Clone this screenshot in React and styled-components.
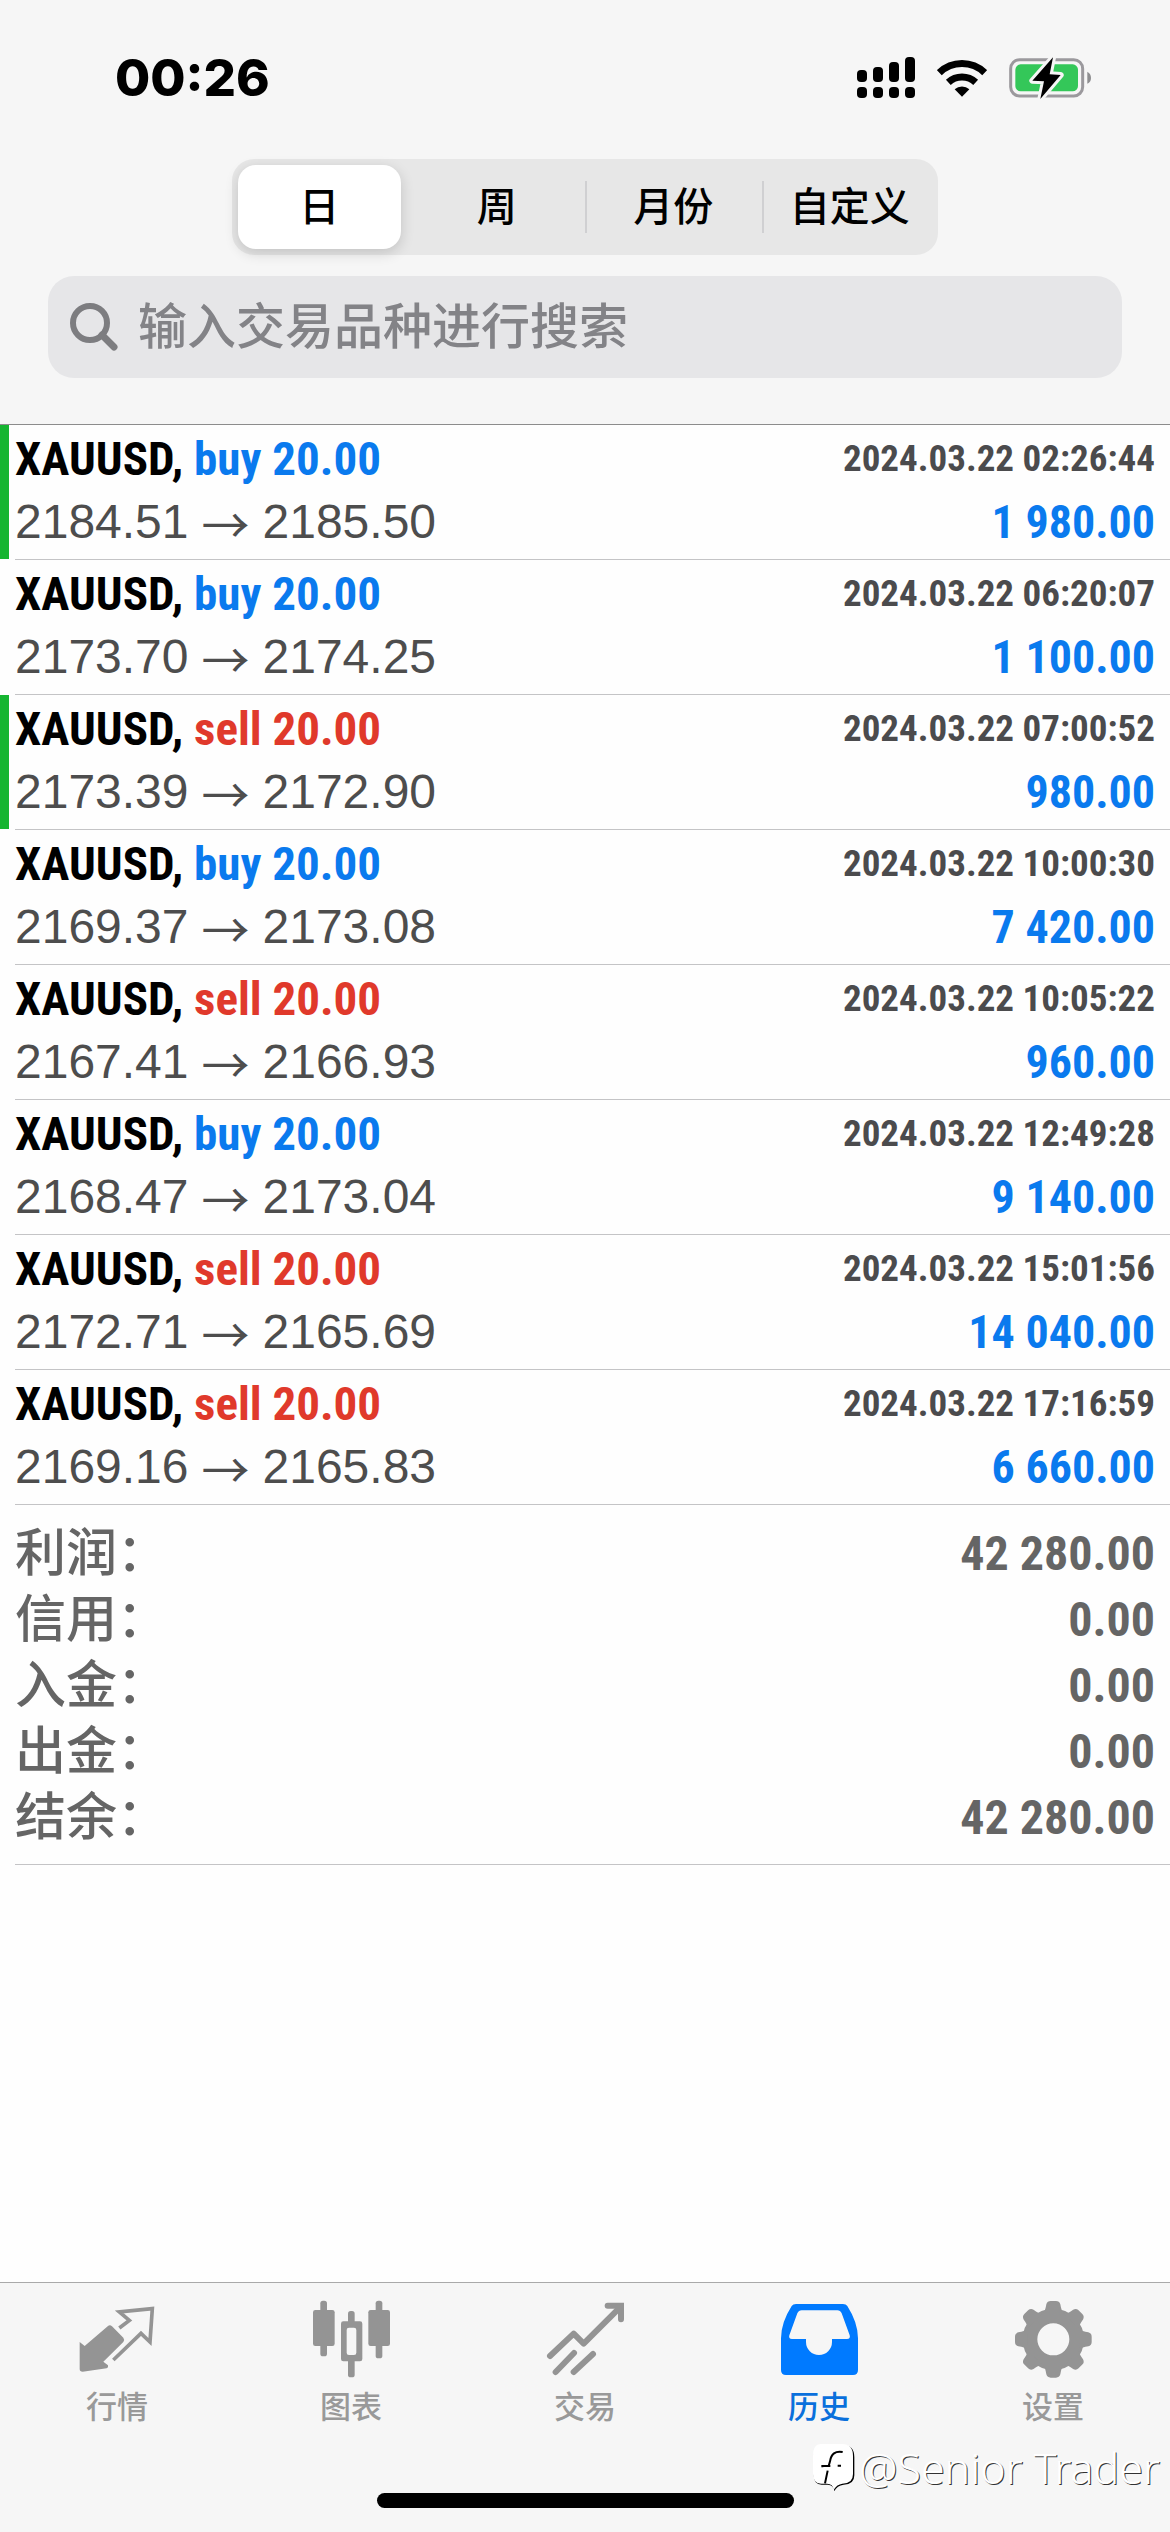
import React, { useState } from "react";
import styled, { createGlobalStyle } from "styled-components";

const sans = `"Liberation Sans", "Noto Sans CJK SC", sans-serif`;
const narrow = `"Roboto Condensed", Roboto, "Noto Sans CJK SC", sans-serif`;
const cjk = `"Noto Sans CJK SC", sans-serif`;

const GlobalStyle = createGlobalStyle`
  * { box-sizing: border-box; }
  body { margin: 0; background: #fff; font-family: ${sans}; }
  button, input { font: inherit; border: 0; margin: 0; padding: 0; background: none; }
`;

const Screen = styled.div`
  min-height: 100vh;
  display: flex;
  flex-direction: column;
  background: #fefefe;
`;

const Header = styled.header`
  background: #f6f6f6;
  border-bottom: 1px solid #8c8c8c;
  padding-bottom: 46px;
`;

const StatusBar = styled.div`
  display: flex;
  align-items: center;
  justify-content: space-between;
  height: 159px;
  padding: 0 78px 3px 115px;
`;

const Clock = styled.time`
  font-family: Inter, sans-serif;
  font-weight: 800;
  font-size: 51px;
  line-height: 60px;
`;

const StatusIcons = styled.div`
  display: flex;
  align-items: center;
  gap: 22px;
`;

const Segments = styled.div`
  display: grid;
  grid-template-columns: repeat(4, 1fr);
  height: 96px;
  margin: 0 232px;
  padding: 6px 0;
  border-radius: 22px;
  background: #e7e7e7;
`;

const Segment = styled.button`
  position: relative;
  display: flex;
  align-items: center;
  justify-content: center;
  border-radius: 18px;
  font-family: ${sans};
  font-weight: 500;
  font-size: 40px;
  line-height: 48px;
  color: #000;
  margin: ${(p) => (p.$active ? "0 8px 0 6px" : "0")};
  background: ${(p) => (p.$active ? "#fff" : "transparent")};
  box-shadow: ${(p) => (p.$active ? "0 4px 14px rgba(0,0,0,.16)" : "none")};

  &::before {
    content: "";
    display: ${(p) => (p.$divided ? "block" : "none")};
    position: absolute;
    left: 0;
    top: 16px;
    bottom: 16px;
    width: 2px;
    background: #d0d0d2;
  }
`;

const Search = styled.label`
  display: flex;
  align-items: center;
  gap: 20px;
  height: 102px;
  margin: 21px 48px 0;
  padding: 0 22px;
  border-radius: 26px;
  background: #e6e6e8;
`;

const SearchInput = styled.input`
  flex: 1;
  min-width: 0;
  font-family: ${sans};
  font-weight: 500;
  font-size: 49px;
  line-height: 72px;
  color: #222;
  outline: none;
  &::placeholder { color: #838387; opacity: 1; }
`;

const Main = styled.main`
  flex: 1;
`;

const Deals = styled.ul`
  list-style: none;
  margin: 0;
  padding: 0;
`;

const Deal = styled.li`
  display: flex;
  height: 135px;
`;

const Marker = styled.span`
  flex: none;
  width: 9px;
  margin-right: 6px;
  margin-bottom: 1px;
  background: ${(p) => (p.$on ? "#16b531" : "transparent")};
`;

const DealBody = styled.div`
  flex: 1;
  display: grid;
  grid-template-columns: 1fr auto;
  grid-template-rows: 63px 63px;
  align-items: center;
  align-content: start;
  padding: 2px 15px 0 0;
  border-bottom: 1px solid #c4c4c6;
`;

const Symbol = styled.span`
  font-family: ${narrow};
  font-weight: 700;
  font-size: 47px;
  line-height: 56px;
  color: #000;
`;

const Side = styled.span`
  color: ${(p) => (p.$side === "buy" ? "#0a7aee" : "#e0392b")};
`;

const Stamp = styled.time`
  font-family: ${narrow};
  font-weight: 700;
  font-size: 37px;
  line-height: 56px;
  color: #4b4b4d;
  text-align: right;
`;

const Prices = styled.span`
  display: flex;
  align-items: center;
  gap: 13px;
  font-size: 48px;
  line-height: 56px;
  color: #4d4d4d;
`;

const Arrow = styled.span`
  font-family: ${cjk};
  font-weight: 400;
`;

const Profit = styled.span`
  font-family: ${narrow};
  font-weight: 700;
  font-size: 46px;
  line-height: 56px;
  color: #0a7aee;
  text-align: right;
`;

const Summary = styled.dl`
  margin: 0 0 0 15px;
  padding: 16px 15px 13px 0;
  border-bottom: 1px solid #c4c4c6;
`;

const SummaryRow = styled.div`
  display: flex;
  align-items: center;
  justify-content: space-between;
  height: 66px;
  color: #656565;
`;

const SummaryLabel = styled.dt`
  font-family: ${sans};
  font-weight: 500;
  font-size: 51px;
  line-height: 66px;
`;

const SummaryValue = styled.dd`
  margin: 0;
  font-family: ${narrow};
  font-weight: 700;
  font-size: 48px;
  line-height: 66px;
`;

const Footer = styled.footer`
  position: relative;
  background: #f6f6f6;
  border-top: 1px solid #a9a9a9;
  padding: 17px 0 24px;
`;

const TabBar = styled.nav`
  display: grid;
  grid-template-columns: repeat(5, 1fr);
`;

const Tab = styled.a`
  display: flex;
  flex-direction: column;
  align-items: center;
  gap: 8px;
  text-decoration: none;
  font-family: ${sans};
  font-weight: 500;
  font-size: 31px;
  line-height: 44px;
  color: ${(p) => (p.$active ? "#0a70dc" : "#999")};
`;

const TabIcon = styled.svg`
  width: 78px;
  height: 78px;
  color: ${(p) => (p.$active ? "#007aff" : "#949494")};
`;

const HomeIndicator = styled.div`
  width: 417px;
  height: 15px;
  margin: 63px auto 0;
  border-radius: 8px;
  background: #000;
`;

const Watermark = styled.div`
  position: absolute;
  right: 10px;
  bottom: 36px;
  display: flex;
  align-items: center;
  gap: 4px;
  font-family: "Noto Sans", sans-serif;
  font-weight: 300;
  font-size: 43px;
  line-height: 56px;
  color: #fff;
  text-shadow: 1px 1px 0 #333;
`;

function Signal() {
  return (
    <svg width="58" height="42" viewBox="0 0 58 42" aria-hidden="true">
      {[13, 10, 5, 0].map((top, i) => (
        <g key={top}>
          <rect x={i * 16} y={top} width="10" height={25 - top} rx="4" />
          <rect x={i * 16} y="30" width="10" height="11" rx="4" />
        </g>
      ))}
    </svg>
  );
}

function Wifi() {
  return (
    <svg width="50" height="38" viewBox="0 0 150 114" aria-hidden="true">
      <g fill="none" stroke="#000" strokeWidth="21">
        <path d="M7 41 A98 98 0 0 1 143 41" />
        <path d="M34 70 A60 60 0 0 1 116 70" />
      </g>
      <path d="M75 113 L53 91 A32 32 0 0 1 97 91 Z" />
    </svg>
  );
}

function Battery() {
  return (
    <svg width="83" height="42" viewBox="567 80 249 126" aria-hidden="true">
      <rect x="572" y="88" width="216" height="109" rx="27" fill="none" stroke="#9b999d" strokeWidth="9" />
      <rect x="586" y="102" width="188" height="81" rx="16" fill="#34c759" />
      <path d="M802 124 Q813 130 813 142 Q813 155 802 160 Z" fill="#8e8e90" />
      <path d="M699 81 L637 151 L672 153 L661 206 L722 134 L689 132 Z" fill="#000" stroke="#f6f6f6" strokeWidth="18" strokeLinejoin="round" paintOrder="stroke" />
    </svg>
  );
}

function Magnifier() {
  return (
    <svg width="48" height="48" viewBox="0 0 48 48" fill="none" stroke="#7d7d80" aria-hidden="true">
      <circle cx="20" cy="20" r="17" strokeWidth="6" />
      <path d="M32 32 L44 44" strokeWidth="7" strokeLinecap="round" />
    </svg>
  );
}

const gearTooth = "M820 130 Q826 122 829 103 Q832 93 842 93 L858 93 Q868 93 871 103 Q874 122 880 130 Z";

const tabs = [
  {
    label: "行情",
    viewBox: "114 90 234 234",
    icon: (
      <>
        <path d="M119 216 L134 228 L204 168 Q210 163 216 169 L250 203 Q255 210 250 216 L190 275 L204 286 Q206 293 200 295 L128 305 Q119 305 119 297 Z" fill="currentColor" />
        <path d="M238 174 L268 151 L238 126 L337 116 L330 216 L303 190 L220 270" fill="none" stroke="currentColor" strokeWidth="11" />
      </>
    ),
  },
  {
    label: "图表",
    viewBox: "816 90 234 234",
    icon: (
      <g fill="currentColor">
        <rect x="841" y="92" width="20" height="167" rx="8" />
        <rect x="819" y="120" width="65" height="108" rx="7" />
        <rect x="1007" y="92" width="20" height="173" rx="8" />
        <rect x="985" y="120" width="65" height="108" rx="7" />
        <rect x="924" y="123" width="20" height="40" rx="8" />
        <rect x="924" y="264" width="20" height="58" rx="8" />
        <path fillRule="evenodd" d="M910 154 H960 Q967 154 967 161 V267 Q967 274 960 274 H910 Q903 274 903 267 V161 Q903 154 910 154 Z M927 173 Q920 173 920 180 V248 Q920 255 927 255 H942 Q949 255 949 248 V180 Q949 173 942 173 Z" />
      </g>
    ),
  },
  {
    label: "交易",
    viewBox: "138 90 234 234",
    icon: (
      <g fill="none" stroke="currentColor" strokeWidth="18" strokeLinecap="round">
        <path d="M150 258 L221 191 L251 221 L360 112" strokeLinejoin="round" />
        <path d="M323 107 H363 V148" />
        <path d="M167 306 L222 249" />
        <path d="M221 306 L279 252" />
      </g>
    ),
  },
  {
    label: "历史",
    active: true,
    viewBox: "840 90 234 234",
    icon: (
      <path fill="currentColor" fillRule="evenodd" d="M888 102 H1029 Q1038 102 1042 108 Q1074 158 1074 205 V300 Q1074 315 1059 315 H858 Q843 315 843 300 V205 Q843 158 875 108 Q879 102 888 102 Z M905 121 Q896 121 892 130 L868 196 Q865 207 876 207 H918 V216 A39 39 0 0 0 996 216 V207 H1041 Q1052 207 1049 196 L1025 130 Q1021 121 1012 121 Z" />
    ),
  },
  {
    label: "设置",
    viewBox: "732 90 234 234",
    icon: (
      <>
        <circle cx="850" cy="208" r="70" fill="none" stroke="currentColor" strokeWidth="44" />
        {[0, 45, 90, 135, 180, 225, 270, 315].map((a) => (
          <path key={a} d={gearTooth} fill="currentColor" transform={`rotate(${a} 850 208)`} />
        ))}
      </>
    ),
  },
];

const deals = [
  { side: "buy", open: "2184.51", close: "2185.50", time: "2024.03.22 02:26:44", profit: "1 980.00", marked: true },
  { side: "buy", open: "2173.70", close: "2174.25", time: "2024.03.22 06:20:07", profit: "1 100.00" },
  { side: "sell", open: "2173.39", close: "2172.90", time: "2024.03.22 07:00:52", profit: "980.00", marked: true },
  { side: "buy", open: "2169.37", close: "2173.08", time: "2024.03.22 10:00:30", profit: "7 420.00" },
  { side: "sell", open: "2167.41", close: "2166.93", time: "2024.03.22 10:05:22", profit: "960.00" },
  { side: "buy", open: "2168.47", close: "2173.04", time: "2024.03.22 12:49:28", profit: "9 140.00" },
  { side: "sell", open: "2172.71", close: "2165.69", time: "2024.03.22 15:01:56", profit: "14 040.00" },
  { side: "sell", open: "2169.16", close: "2165.83", time: "2024.03.22 17:16:59", profit: "6 660.00" },
];

const totals = [
  ["利润：", "42 280.00"],
  ["信用：", "0.00"],
  ["入金：", "0.00"],
  ["出金：", "0.00"],
  ["结余：", "42 280.00"],
];

const periods = ["日", "周", "月份", "自定义"];

export default function App() {
  const [period, setPeriod] = useState(0);
  return (
    <Screen>
      <GlobalStyle />
      <Header>
        <StatusBar>
          <Clock>00:26</Clock>
          <StatusIcons>
            <Signal />
            <Wifi />
            <Battery />
          </StatusIcons>
        </StatusBar>
        <Segments role="group">
          {periods.map((name, i) => (
            <Segment
              key={name}
              type="button"
              aria-pressed={period === i}
              $active={period === i}
              $divided={i > 0 && period !== i && period !== i - 1}
              onClick={() => setPeriod(i)}
            >
              {name}
            </Segment>
          ))}
        </Segments>
        <Search>
          <Magnifier />
          <SearchInput type="text" placeholder="输入交易品种进行搜索" />
        </Search>
      </Header>
      <Main>
        <Deals>
          {deals.map((d) => (
            <Deal key={d.time}>
              <Marker $on={d.marked} />
              <DealBody>
                <Symbol>
                  XAUUSD, <Side $side={d.side}>{d.side} 20.00</Side>
                </Symbol>
                <Stamp>{d.time}</Stamp>
                <Prices>
                  <span>{d.open}</span>
                  <Arrow>→</Arrow>
                  <span>{d.close}</span>
                </Prices>
                <Profit>{d.profit}</Profit>
              </DealBody>
            </Deal>
          ))}
        </Deals>
        <Summary>
          {totals.map(([label, value]) => (
            <SummaryRow key={label}>
              <SummaryLabel>{label}</SummaryLabel>
              <SummaryValue>{value}</SummaryValue>
            </SummaryRow>
          ))}
        </Summary>
      </Main>
      <Footer>
        <TabBar>
          {tabs.map((t) => (
            <Tab key={t.label} href="#" $active={t.active}>
              <TabIcon viewBox={t.viewBox} $active={t.active} aria-hidden="true">
                {t.icon}
              </TabIcon>
              {t.label}
            </Tab>
          ))}
        </TabBar>
        <HomeIndicator />
        <Watermark>
          <svg width="42" height="48" viewBox="0 0 126 144" aria-hidden="true">
            <path d="M26 4 H92 Q124 4 124 40 V94 Q124 122 92 122 Q72 124 64 142 Q62 122 44 122 H26 Q2 122 2 94 V40 Q2 4 26 4 Z" fill="#000" />
            <path d="M24 0 H88 Q120 0 120 36 V90 Q120 119 88 119 Q72 121 62 137 Q60 119 42 119 H24 Q0 119 0 90 V36 Q0 0 24 0 Z" fill="#fff" />
            <path d="M89 24 Q56 18 51 52 L47 66 M28 70 V66 H52 M74 65 H84 M44 80 L36 118" fill="none" stroke="#000" strokeWidth="6" />
          </svg>
          <span>@Senior Trader</span>
        </Watermark>
      </Footer>
    </Screen>
  );
}
